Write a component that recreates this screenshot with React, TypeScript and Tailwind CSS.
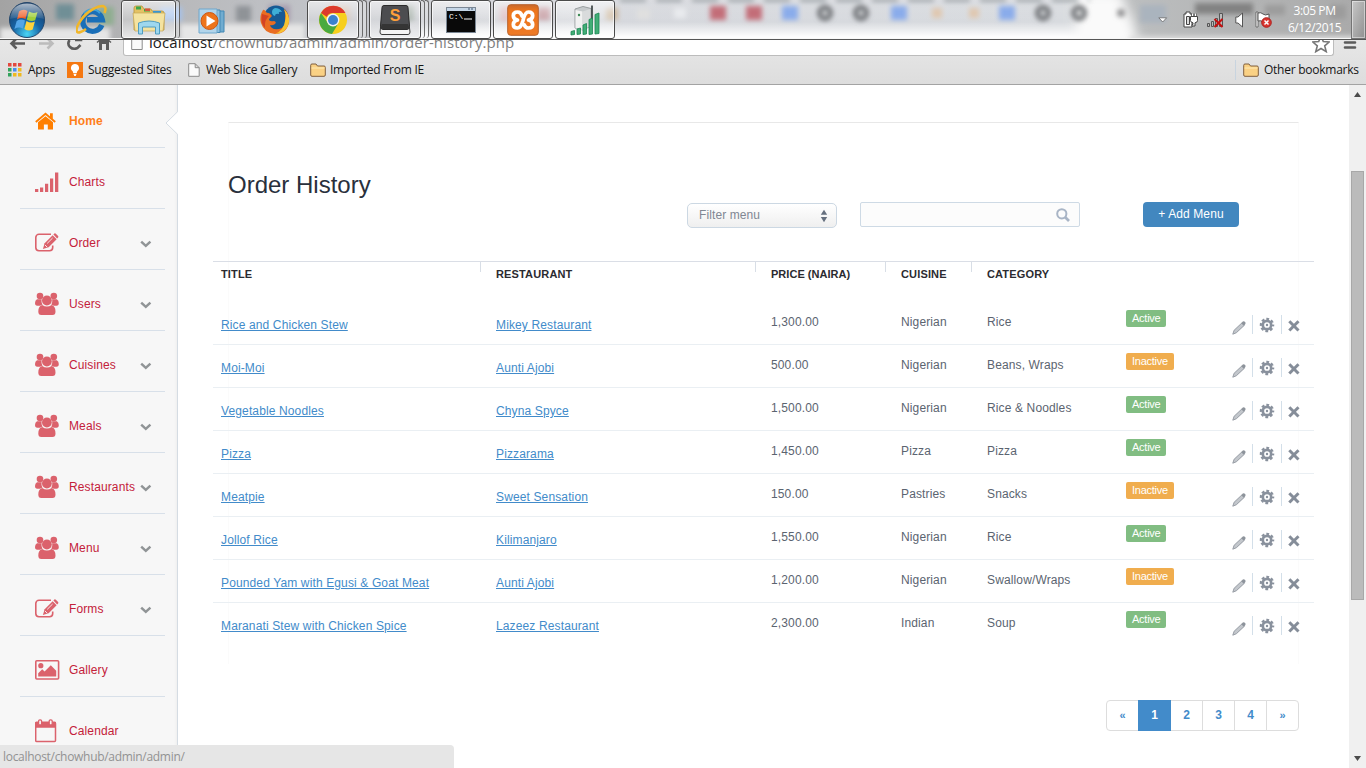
import React from "react";

type IconName = "home" | "charts" | "edit" | "users" | "gallery" | "calendar";

const navItems: { label: string; icon: IconName; expandable?: boolean }[] = [
  { label: "Home", icon: "home" },
  { label: "Charts", icon: "charts" },
  { label: "Order", icon: "edit", expandable: true },
  { label: "Users", icon: "users", expandable: true },
  { label: "Cuisines", icon: "users", expandable: true },
  { label: "Meals", icon: "users", expandable: true },
  { label: "Restaurants", icon: "users", expandable: true },
  { label: "Menu", icon: "users", expandable: true },
  { label: "Forms", icon: "edit", expandable: true },
  { label: "Gallery", icon: "gallery" },
  { label: "Calendar", icon: "calendar" },
];

const orders = [
  { title: "Rice and Chicken Stew", restaurant: "Mikey Restaurant", price: "1,300.00", cuisine: "Nigerian", category: "Rice", active: true },
  { title: "Moi-Moi", restaurant: "Aunti Ajobi", price: "500.00", cuisine: "Nigerian", category: "Beans, Wraps", active: false },
  { title: "Vegetable Noodles", restaurant: "Chyna Spyce", price: "1,500.00", cuisine: "Nigerian", category: "Rice & Noodles", active: true },
  { title: "Pizza", restaurant: "Pizzarama", price: "1,450.00", cuisine: "Pizza", category: "Pizza", active: true },
  { title: "Meatpie", restaurant: "Sweet Sensation", price: "150.00", cuisine: "Pastries", category: "Snacks", active: false },
  { title: "Jollof Rice", restaurant: "Kilimanjaro", price: "1,550.00", cuisine: "Nigerian", category: "Rice", active: true },
  { title: "Pounded Yam with Egusi & Goat Meat", restaurant: "Aunti Ajobi", price: "1,200.00", cuisine: "Nigerian", category: "Swallow/Wraps", active: false },
  { title: "Maranati Stew with Chicken Spice", restaurant: "Lazeez Restaurant", price: "2,300.00", cuisine: "Indian", category: "Soup", active: true },
];

function NavIcon({ name }: { name: IconName }) {
  switch (name) {
    case "home":
      return (
        <svg width="26" height="24" viewBox="0 0 26 24" fill="#ff7f00">
          <path d="M10.500 7.200 18 13.200V20.500h-5.200v-5H8.900v5H3v-7.300z" />
          <path d="M.8 13 10.500 4.800l9.700 8.200" fill="none" stroke="#ff7f00" strokeWidth="1.900" />
          <path d="M15 4.300h2.800v6L15 7.800z" />
        </svg>
      );
    case "charts":
      return (
        <svg width="26" height="24" viewBox="0 0 26 24" fill="#db626c">
          <path d="M0 19h3.300v3H0zM5 17.500h3.200V22H5zM10 13.800h3.200V22H10zM15 8.600h3.200V22H15zM20 2.500h3.300V22H20z" />
        </svg>
      );
    case "edit":
      return (
        <svg width="26" height="24" viewBox="0 0 26 24" fill="none" stroke="#db626c">
          <path d="M16 3.300H4A3.200 3.200 0 0 0 .8 6.500v10A3.200 3.200 0 0 0 4 19.700h10.500a3.200 3.200 0 0 0 3.200-3.200v-2" strokeWidth="1.600" />
          <path d="m9.600 12.300 8-8 4 4-8 8-5.700 1.800z" fill="#db626c" stroke="none" />
          <path d="m18.400 3.500.9-.9q.8-.6 1.600.1l2.200 2.200q.6.800 0 1.500l-1 1z" fill="#db626c" stroke="none" />
          <path d="m12.200 12.400 5.400-5.400M10 14l2.200 2.200" stroke="#f7f7f7" strokeWidth="0.900" />
        </svg>
      );
    case "users":
      return (
        <svg width="26" height="24" viewBox="0 0 26 24" fill="#db626c">
          <circle cx="5" cy="4" r="3.300" />
          <circle cx="18.800" cy="4" r="3.300" />
          <path d="M2 7.300h4.800c-.7 2-.1 4 .8 5.200L5 13.800H2.300Q0 13.800 0 11 0 8.300 2 7.300zM21.800 7.300H17c.7 2 .1 4-.8 5.200l2.600 1.300h2.700q2.300 0 2.300-2.800 0-2.700-2-3.700z" />
          <circle cx="11.900" cy="8.500" r="4.900" />
          <path d="M7.200 12.900q4.700 3.400 9.400 0 3.900 1 3.900 6.600 0 3.500-3 3.500H6.300q-3 0-3-3.500 0-5.600 3.900-6.600z" />
        </svg>
      );
    case "gallery":
      return (
        <svg width="26" height="24" viewBox="0 0 26 24" fill="#db626c">
          <rect x=".8" y="2.800" width="22.800" height="18.200" rx="1" fill="none" stroke="#db626c" strokeWidth="1.600" />
          <circle cx="5.800" cy="7.700" r="2.600" />
          <path d="M3.200 18.500v-3.300l4-4 2.400 2.400 6.200-6.300 5.400 5.400v5.800z" />
        </svg>
      );
    default:
      return (
        <svg width="26" height="24" viewBox="0 0 26 24" fill="none" stroke="#db626c">
          <rect x=".7" y="3.500" width="19.800" height="19" rx="1" strokeWidth="1.500" />
          <path d="M.7 3.200h19.800v5H.7z" fill="#db626c" />
          <rect x="3.600" y=".8" width="3" height="5.200" rx="1.300" fill="#f7f7f7" strokeWidth="1.300" />
          <rect x="14.200" y=".8" width="3" height="5.200" rx="1.300" fill="#f7f7f7" strokeWidth="1.300" />
        </svg>
      );
  }
}

function Sidebar() {
  return (
    <aside className="relative w-[178px] shrink-0 border-r border-[#d5dce3] bg-[#f7f7f7] pt-[2px] shadow-[inset_-3px_0_3px_-2px_#eeeeee]">
      {navItems.map((item, i) => (
        <a
          key={item.label}
          className={`mr-[12px] ml-[20px] flex h-[61px] w-[145px] items-center border-b border-[#d8e0e9] pt-[8px] pl-[15px] text-[12px] ${i === 0 ? "font-bold text-[#ff7f1a]" : "text-[#c4213a]"}`}
        >
          <NavIcon name={item.icon} />
          <span className={`ml-[8px] w-[68px] shrink-0 ${i === 0 ? "tracking-[0.1px]" : "tracking-[0.12px]"}`}>{item.label}</span>
          {item.expandable && (
            <svg className="mt-[1px] ml-[3px] shrink-0" width="12" height="8" viewBox="0 0 12 8" fill="none" stroke="#909496" strokeWidth="2.500">
              <path d="m1.200 1.600 4.600 4.200 4.600-4.200" />
            </svg>
          )}
        </a>
      ))}
      <svg className="absolute top-[26px] right-[-1px]" width="13" height="24" viewBox="0 0 13 24">
        <path d="M13 .5 1 12l12 11.5z" fill="#fff" />
        <path d="M12.500 .8 1 12l11.500 11.200" fill="none" stroke="#d5dce3" />
      </svg>
    </aside>
  );
}

function RowActions() {
  return (
    <div className="flex h-[19px] items-center">
      <svg className="mt-[5px]" width="15" height="15" viewBox="0 0 15 15">
        <path d="m.8 14.200 1.300-3.900L9.800 3l2.400 2.400-7.800 7.300z" fill="#c3c7cc" stroke="#979da5" strokeWidth="1" />
        <path d="m9.200 3.200 1.600-1.700q1-.7 2.100.3t.5 2.200L12 5.700z" fill="#8d939b" />
      </svg>
      <span className="ml-[5px] h-[19px] w-px bg-[#d3dfe9]" />
      <svg className="ml-[6px]" width="16" height="16" viewBox="0 0 16 16" fill="none" stroke="#89919d">
        <circle cx="8" cy="8" r="4.200" strokeWidth="2.700" />
        <circle cx="8" cy="8" r="6.100" strokeWidth="2.300" strokeDasharray="2.790 2" strokeDashoffset="1.390" />
        <circle cx="8" cy="8" r="1.200" fill="#89919d" stroke="none" />
      </svg>
      <span className="ml-[6px] h-[19px] w-px bg-[#d3dfe9]" />
      <svg className="mt-[3px] ml-[6px]" width="12" height="12" viewBox="0 0 12 12" stroke="#858d99" strokeWidth="3">
        <path d="m1.300 1.300 9.200 9.200m0-9.200-9.200 9.200" />
      </svg>
    </div>
  );
}

const columns = "grid grid-cols-[267px_275px_130px_86px_155px_106px_1fr]";

function OrderTable() {
  return (
    <div className="mx-[-16px] text-[12px] text-[#5b6470]">
      <div className={`${columns} h-[41px] border-t border-[#dadee6] text-[11px] font-bold text-[#2b2b30]`}>
        {["TITLE", "RESTAURANT", "PRICE (NAIRA)", "CUISINE", "CATEGORY"].map((h, i) => (
          <div key={h} className="flex">
            {i > 0 && <span className="h-[10px] w-px bg-[#d8dee6]" />}
            <span className={`pt-[3px] whitespace-nowrap ${i === 2 ? "tracking-[0.03px]" : "tracking-[0.15px]"} ${i === 0 ? "pl-[8px]" : "pl-[15px]"}`}>{h}</span>
          </div>
        ))}
      </div>
      {orders.map((o, i) => (
        <div key={o.title} className={`${columns} h-[43px] tracking-[0.13px] ${i < orders.length - 1 ? "border-b border-[#eaeff3]" : ""}`}>
          <div className="pt-[14px] pl-[8px]">
            <a className="whitespace-nowrap text-[#428bca] underline underline-offset-1">{o.title}</a>
          </div>
          <div className="pt-[14px] pl-[16px]">
            <a className="whitespace-nowrap text-[#428bca] underline underline-offset-1">{o.restaurant}</a>
          </div>
          <div className="pt-[11px] pl-[16px]">{o.price}</div>
          <div className="pt-[11px] pl-[16px]">{o.cuisine}</div>
          <div className="pt-[11px] pl-[16px]">{o.category}</div>
          <div className="pt-[8px]">
            <span className={`flex h-[17px] w-fit items-center rounded-[2px] px-[6px] pb-px text-[11px] tracking-[-0.25px] text-white ${o.active ? "bg-[#81bd82]" : "bg-[#f0ad4e]"}`}>
              {o.active ? "Active" : "Inactive"}
            </span>
          </div>
          <div className="pt-[13px]">
            <RowActions />
          </div>
        </div>
      ))}
    </div>
  );
}

function Content() {
  return (
    <main className="w-[1171px] shrink-0 bg-white pt-[37px] pr-[50px] pl-[50px] leading-[18px]">
      <section className="h-[542px] border-x border-t border-x-[#fbfbfb] border-t-[#e8e8e8]">
        <div className="flex h-[138px]">
          <h1 className="mt-[48px] -ml-px w-[459px] text-[24px] leading-[28px] text-[#29303c]">Order History</h1>
          <div className="mt-[80px] flex h-[25px] w-[150px] items-center justify-between rounded-[5px] border border-[#ccd8e3] bg-linear-to-b from-white to-[#efefef] pr-[8px] pb-[2px] pl-[11px] text-[12px] tracking-[0.1px] text-[#808793]">
            <span>Filter menu</span>
            <svg className="mt-[3px]" width="8" height="14" viewBox="0 0 8 14" fill="#66707f">
              <path d="m4 .7 3.200 5H.8zM4 13.300.8 8h6.400z" />
            </svg>
          </div>
          <div className="mt-[79px] ml-[23px] flex h-[25px] w-[220px] items-center justify-end rounded-[2px] border border-[#cedae5] bg-[#fcfcfc] pr-[9px]">
            <svg width="14" height="14" viewBox="0 0 14 14" fill="none" stroke="#a9b5c6" strokeWidth="2">
              <circle cx="5.800" cy="5.800" r="4.600" />
              <path d="m9 9 4 4" strokeWidth="2.600" />
            </svg>
          </div>
          <button className="mt-[79px] ml-[63px] h-[25px] w-[96px] rounded-[4px] bg-[#4287bf] pb-px text-[12px] leading-[18px] tracking-[0.1px] text-white">+ Add Menu</button>
        </div>
        <OrderTable />
      </section>
      <nav className="mt-[36px] flex justify-end text-[12px] font-bold text-[#428bca]">
        {["«", "1", "2", "3", "4", "»"].map((p, i) => (
          <a
            key={p}
            className={`flex h-[31px] w-[33px] items-center justify-center border pb-px ${i > 0 ? "-ml-px" : "rounded-l-[4px]"} ${i === 5 ? "rounded-r-[4px]" : ""} ${i === 1 ? "z-10 border-[#428bca] bg-[#428bca] text-white" : "border-[#dddddd] bg-white"} ${i === 0 || i === 5 ? "text-[11px]" : ""}`}
          >
            {p}
          </a>
        ))}
      </nav>
    </main>
  );
}

function Scrollbar() {
  return (
    <div className="flex w-[17px] shrink-0 flex-col items-center bg-[#f0f0f0]">
      <svg className="mt-[7px]" width="7" height="5" viewBox="0 0 7 5" fill="#4c4c4c">
        <path d="m3.500 0 3.500 5H0z" />
      </svg>
      <div className="mt-[74px] h-[429px] w-[13px] border border-[#a8a8a8] bg-[#bbbbbb]" />
      <svg className="mt-auto mb-[7px]" width="7" height="5" viewBox="0 0 7 5" fill="#4c4c4c">
        <path d="M0 0h7L3.500 5z" />
      </svg>
    </div>
  );
}

function StartOrb() {
  return (
    <svg width="38" height="38" viewBox="0 0 38 38">
      <defs>
        <radialGradient id="orb" cx=".5" cy=".9" r=".9">
          <stop offset="0" stopColor="#49d5f5" />
          <stop offset=".45" stopColor="#1763a4" />
          <stop offset="1" stopColor="#173961" />
        </radialGradient>
        <linearGradient id="gloss" x1="0" y1="0" x2="0" y2="1">
          <stop offset="0" stopColor="#fff" stopOpacity=".65" />
          <stop offset="1" stopColor="#fff" stopOpacity=".08" />
        </linearGradient>
      </defs>
      <circle cx="19" cy="19" r="17.500" fill="url(#orb)" stroke="#24476c" />
      <path d="M11 10.500q4-3 8.500-.5l-2 8q-4.500-2-8.500.5z" fill="#f0622c" />
      <path d="M21 10.500q4 2.500 8.500.5l-2.300 8.200q-4 2-8.400-.8z" fill="#a0cf3b" />
      <path d="M8.700 20q4-2.500 8.300-.5l-2.200 8q-4-2-8.400.5z" fill="#53a5e7" />
      <path d="M18.500 20q4 2.700 8.400.6l-2.200 7.900q-4.200 2.200-8.300-.6z" fill="#ffd23b" />
      <path d="M2 18Q4 2.500 19 2.500T36 18Q19 13 2 18z" fill="url(#gloss)" />
    </svg>
  );
}

function ExplorerIE() {
  return (
    <svg width="32" height="32" viewBox="0 0 32 32" fill="none">
      <path d="M25.800 21A9.800 9.800 0 1 1 26.300 15.800H11" stroke="#1a6fb8" strokeWidth="5.400" />
      <path d="M8 9.500A10.500 10.500 0 0 1 24 9" stroke="#3fa2dc" strokeWidth="2" />
      <path d="M10 25C-1 33-2 26 5 16S22 2 27 2q4 1 1.500 7" stroke="#f0b62a" strokeWidth="2.600" />
    </svg>
  );
}

function FilesIcon() {
  return (
    <svg width="34" height="32" viewBox="0 0 34 32">
      <path d="M2 4q0-2 2-2h6l2 3h7l1 2h10q2 0 2 2v17H2z" fill="#e4c264" stroke="#b89539" strokeWidth=".8" />
      <path d="M4 2.500h5v3H4zM12 5h6v2.500h-6z" fill="#3da84a" />
      <path d="M13 4.500h5V7h-5z" fill="#d8573c" />
      <path d="M21 7h8v3h-8z" fill="#3596d5" />
      <path d="M1 9h32l-2 18H3z" fill="#f4e3a0" stroke="#c5a654" strokeWidth=".7" />
      <path d="M6.500 19q10.500-4 21 0v11h-4v-7h-13v7h-4z" fill="#9ed7ee" stroke="#4f9cc0" />
    </svg>
  );
}

function MediaPlayerIcon() {
  return (
    <svg className="mt-[4px]" width="30" height="28" viewBox="0 0 30 28">
      <path d="M9 3h17v21H9z" fill="#70acd0" stroke="#4388b4" />
      <path d="M5 2h17v22.500H5z" fill="#8fc0df" stroke="#4388b4" />
      <path d="M1 1h18v24H1z" fill="#b2d5eb" stroke="#6ea7cc" />
      <circle cx="11.500" cy="13" r="8.500" fill="#ed741b" stroke="#cc5814" />
      <path d="m8.500 7.500 9 5.500-9 5.500z" fill="#fff" />
    </svg>
  );
}

function FirefoxIcon() {
  return (
    <svg width="32" height="32" viewBox="0 0 32 32">
      <circle cx="17" cy="14" r="12.500" fill="#175a94" />
      <path d="M16 4q5 0 7 4-4-1-3 2-4-1-4 2-3-1-3-4 0-3 3-4z" fill="#3eaed7" />
      <path d="M4 6q-4 6-2 13 3 10 14 11 12 0 14-12 1-8-5-13 2 5 1 9 2 9-6 11-8 1-9-4 2 1 5-1 2-2-1-3-5 1-5-2l3-3q-3-4-5-3-3-4-4-3z" fill="#e96d22" />
      <path d="M25 5q6 6 5 13-2 11-14 12 9-4 10-13 2-5-1-12z" fill="#f6c331" />
      <path d="M3 10q-2 9 3 14-1-8 4-12z" fill="#d34324" />
    </svg>
  );
}

function ChromeIcon() {
  return (
    <svg width="30" height="30" viewBox="0 0 30 30">
      <circle cx="15" cy="15" r="14" fill="#f7cf1c" />
      <path d="M3 8a14 14 0 0 1 24.500 0H15q-5 0-6 4z" fill="#dd3a2b" />
      <path d="M3 8A14 14 0 0 0 14 29l6-10q-5 4-10-1z" fill="#49aa40" />
      <circle cx="15" cy="15" r="6.400" fill="#f4f4f4" />
      <circle cx="15" cy="15" r="5" fill="#3b82ce" />
    </svg>
  );
}

function SublimeIcon() {
  return (
    <svg width="32" height="32" viewBox="0 0 32 32">
      <path d="M3 12h26l2 16q0 2.500-2 2.500H3Q1 30.500 1 28z" fill="#f4f4f4" stroke="#3c3c3c" />
      <path d="M5 1.500h22q2 0 2 2l1.500 19q0 3-2.500 3H4q-2.500 0-2.500-3L3 3.500q0-2 2-2z" fill="#4c4d50" stroke="#2b2b2b" />
      <path d="M3 20h26l1 3q0 2-2 2H4q-2 0-2-2z" fill="#353535" />
      <text x="16" y="17" fontSize="16" fontWeight="700" textAnchor="middle" fill="#ffa03a" className="font-['Liberation_Sans',sans-serif]">S</text>
    </svg>
  );
}

function TerminalIcon() {
  return (
    <svg width="30" height="26" viewBox="0 0 30 26">
      <rect x=".5" y=".5" width="29" height="25" fill="#090909" stroke="#7b8794" />
      <path d="M1 1h28v3H1z" fill="#c5d6e7" />
      <path d="M22 2h2M25 2h2" stroke="#41576e" />
      <text x="3" y="12" fontSize="8" fill="#fff" className="font-['Liberation_Mono',monospace]">C:\</text>
      <path d="M18 12h8" stroke="#fff" />
    </svg>
  );
}

function XamppIcon() {
  return (
    <svg width="32" height="32" viewBox="0 0 32 32" fill="none">
      <defs>
        <linearGradient id="xampp" x1="0" y1="0" x2="0" y2="1">
          <stop offset="0" stopColor="#c9692b" />
          <stop offset=".2" stopColor="#ed751c" />
          <stop offset="1" stopColor="#ee7a26" />
        </linearGradient>
      </defs>
      <rect x=".7" y=".7" width="30.600" height="30.600" rx="3" fill="url(#xampp)" stroke="#b8622c" />
      <path d="M15 12Q14 8 10.500 8 6.300 8 6.300 11.700 6.300 15 10.500 16 6.300 17 6.300 20.500 6.300 24 10.500 24 14 24 16 16.500 18 8 21.500 8 25.700 8 25.700 11.700 25.700 15 21.500 16 25.700 17 25.700 20.500 25.700 24 21.500 24 18.500 24 17.300 21" stroke="#fff" strokeWidth="3.700" strokeLinejoin="round" strokeLinecap="round" />
    </svg>
  );
}

function NetworkMonitorIcon() {
  return (
    <svg width="32" height="32" viewBox="0 0 32 32">
      <path d="m6 5 8-2.500 8 2V22l-8 4-8-2z" fill="#c6cacc" stroke="#9a9fa1" />
      <path d="m6.500 6 7 1.500V26l-7-2z" fill="#f1f1f1" />
      <path d="M13.500 7.500 21.500 5v17l-8 4z" fill="#d9dbdc" />
      <circle cx="10" cy="11" r="1.200" fill="#3c8a55" />
      <path d="M23 1.500v14" stroke="#252d2d" strokeWidth="1.500" />
      <path d="m2 27.500 3.500-1v4l-3.500.5zM8 25l3.500-1v6l-3.500.5zM14 21l3.500-1.500V30l-3.500.5zM20 15.500l3.500-1.500v16l-3.500.5zM26 10.500 30 9v20.500l-4 .5z" fill="#41ae76" stroke="#1b8553" strokeWidth=".8" />
    </svg>
  );
}

const taskButton = "flex h-[39px] shrink-0 items-center justify-center rounded-[3px] border border-[#4b4b4b] bg-linear-to-b from-white/60 via-white/25 to-white/70 shadow-[inset_0_0_0_1px_rgba(255,255,255,0.65)]";

function StackEdges({ count }: { count: number }) {
  return (
    <div className="flex h-[39px] shrink-0">
      {Array.from({ length: count }, (_, i) => (
        <span key={i} className="h-[38px] w-[4px] rounded-r-[3px] border-t border-r border-[#6b6b6b] bg-white/30" />
      ))}
    </div>
  );
}

const blurredSpots: [number, number, number, number, string][] = [
  [56, 4, 18, 16, "#6f8f96"], [98, 7, 16, 18, "#8fae90"], [160, 7, 22, 14, "#a6c2ec"], [236, 6, 15, 16, "#8f9397"],
  [268, 5, 22, 18, "#a79cae"], [328, 5, 22, 16, "#cdb8a9"], [388, 5, 26, 16, "#9aa69d"], [500, 6, 18, 15, "#d8b2b8"],
  [537, 7, 13, 13, "#b9868e"], [606, 8, 12, 12, "#ccb79d"],
  [637, 9, 13, 10, "#e0e0df"], [674, 8, 12, 10, "#e9ebee"], [710, 6, 16, 14, "#c36d78"], [746, 6, 16, 14, "#c36d78"],
  [782, 6, 16, 14, "#8aaceb"], [891, 6, 16, 14, "#8aaceb"], [932, 8, 10, 10, "#e0c8b0"], [969, 8, 10, 10, "#e0c8b0"],
  [999, 6, 16, 14, "#8aaceb"], [1140, 5, 26, 18, "#aab4be"],
  [1195, 3, 58, 11, "#828282"], [1265, 5, 20, 10, "#9c9c9c"], [1330, 5, 16, 14, "#9c9c9c"],
];

function TaskbarGlass() {
  return (
    <svg className="absolute inset-0" width="1366" height="40" viewBox="0 0 1366 40">
      <defs>
        <linearGradient id="glass" x1="0" y1="0" x2="1" y2="0">
          <stop offset="0" stopColor="#a3a3a3" />
          <stop offset=".12" stopColor="#b7b8ba" />
          <stop offset=".23" stopColor="#c1c3c8" />
          <stop offset=".43" stopColor="#d6d8dd" />
          <stop offset=".78" stopColor="#d8dbdf" />
          <stop offset=".83" stopColor="#bcbebf" />
          <stop offset="1" stopColor="#a9a9a9" />
        </linearGradient>
        <linearGradient id="sheen" x1="0" y1="0" x2="0" y2="1">
          <stop offset="0" stopColor="#fff" stopOpacity=".1" />
          <stop offset=".55" stopColor="#fff" stopOpacity="0" />
          <stop offset=".92" stopColor="#fff" stopOpacity=".95" />
        </linearGradient>
        <filter id="soft" x="-50%" y="-50%" width="200%" height="200%">
          <feGaussianBlur stdDeviation="2.500" />
        </filter>
        <filter id="wide" x="-20%" y="-50%" width="140%" height="200%">
          <feGaussianBlur stdDeviation="6" />
        </filter>
      </defs>
      <rect width="1366" height="40" fill="url(#glass)" />
      <rect x="420" width="700" height="40" fill="url(#sheen)" />
      <path d="M1075-8h44l14 30 6 26h-64z" fill="#fafafa" filter="url(#wide)" />
      <g filter="url(#soft)">
        <path d="M0 28h110v14H0zM180 24h125v18H180z" fill="#e6e6e6" />
        <path d="M1130 36h236v8h-236z" fill="#dedede" />
        <path d="M620 0h470" stroke="#91979c" strokeWidth="3" strokeDasharray="26 10" />
        {blurredSpots.map(([x, y, w, h, c]) => (
          <rect key={x} x={x} y={y} width={w} height={h} fill={c} />
        ))}
        {[825, 861, 1043, 1079].map((cx) => (
          <circle key={cx} cx={cx} cy="13" r="5.500" fill="none" stroke="#727478" strokeWidth="5" />
        ))}
        <circle cx="1121" cy="13" r="4" fill="#8e8e90" />
      </g>
      <path d="M0 38.500h1366" stroke="#f8f8f8" />
      <path d="M0 39.500h1366" stroke="#555" />
    </svg>
  );
}

function Tray() {
  return (
    <div className="relative ml-auto flex h-[39px] shrink-0 items-center">
      <svg width="10" height="6" viewBox="0 0 10 6" fill="#fff" stroke="#666" strokeWidth=".8">
        <path d="M.8.8h7.800L4.700 5z" />
      </svg>
      <svg className="ml-[15px]" width="16" height="18" viewBox="0 0 16 18" fill="#fff" stroke="#444" strokeWidth="1">
        <path d="M1 3h2V1h4v2h2v13H1z" />
        <path d="M3.500 5.500h3v8h-3z" fill="#ddd" />
        <path d="M7.500 5.500h7v4q0 2-2.500 2.300V15H9v-1.500h1v-1.700q-2.500-.3-2.500-2.300z" />
        <path d="M9.500 5V2.500M12.500 5V2.500" stroke="#444" strokeWidth="2" />
        <path d="M9.500 5V2.500M12.500 5V2.500" stroke="#fff" strokeWidth="1" />
      </svg>
      <svg className="ml-[8px]" width="17" height="16" viewBox="0 0 17 16" stroke="#555" fill="#bbb">
        <path d="M.5 11.500h2v3h-2zM4.500 9.500h2v5h-2zM8.500 6.500h2v8h-2zM12.500 1.500h3v13h-3z" />
        <path d="m7.500 7 8 8m0-8-8 8" stroke="#c70f0f" strokeWidth="2" />
      </svg>
      <svg className="ml-[11px]" width="10" height="16" viewBox="0 0 10 16" fill="#fff" stroke="#555">
        <path d="M.8 5H3l4.500-4v14L3 11H.8z" />
      </svg>
      <svg className="ml-[10px]" width="17" height="17" viewBox="0 0 17 17">
        <path d="M1 1h2v15H1z" fill="#fff" stroke="#555" strokeWidth=".8" />
        <path d="M3 2q3-1 5 1t6 0v8q-4 2-6 0t-5-1z" fill="#fff" stroke="#555" />
        <circle cx="11.500" cy="11.500" r="4.800" fill="#d93630" stroke="#ac1e1c" />
        <path d="m9.500 9.500 4 4m0-4-4 4" stroke="#fff" strokeWidth="1.500" />
      </svg>
      <div className="mt-[-2px] ml-[13px] w-[59px] text-center font-['Open_Sans',sans-serif] text-[12px] leading-[17px] tracking-[-0.4px] whitespace-nowrap text-white">
        <div>3:05 PM</div>
        <div>6/12/2015</div>
      </div>
      <div className="ml-[7px] h-[39px] w-[15px] border border-[#747474] bg-linear-to-br from-[#c7c7c7] to-[#919191] shadow-[inset_0_0_0_1px_rgba(255,255,255,0.45)]" />
    </div>
  );
}

function Taskbar() {
  return (
    <header className="relative h-[40px] shrink-0 overflow-hidden">
      <TaskbarGlass />
      <div className="relative flex h-[39px] items-center pl-[8px]">
        <StartOrb />
        <div className="ml-[30px] w-[45px]"><ExplorerIE /></div>
        <div className={`${taskButton} w-[55px]`}><FilesIcon /></div>
        <StackEdges count={1} />
        <div className="ml-[18px] w-[61px]"><MediaPlayerIcon /></div>
        <div className="w-[48px]"><FirefoxIcon /></div>
        <div className={`${taskButton} w-[52px]`}><ChromeIcon /></div>
        <StackEdges count={2} />
        <div className={`${taskButton} ml-[2px] w-[52px]`}><SublimeIcon /></div>
        <StackEdges count={2} />
        <div className={`${taskButton} ml-[2px] w-[60px]`}><TerminalIcon /></div>
        <div className={`${taskButton} ml-[2px] w-[60px]`}><XamppIcon /></div>
        <div className={`${taskButton} ml-[2px] w-[60px]`}><NetworkMonitorIcon /></div>
        <Tray />
      </div>
    </header>
  );
}

function FolderIcon() {
  return (
    <svg width="16" height="14" viewBox="0 0 16 14">
      <path d="M.7 12V2.300Q.7 1 2 1h4l1.500 2H14q1.300 0 1.300 1.300V12q0 1.300-1.300 1.300H2Q.7 13.300.7 12z" fill="#fad184" stroke="#806040" />
      <path d="M1.500 5h13" stroke="#ffebb5" />
    </svg>
  );
}

function FileIcon() {
  return (
    <svg width="12" height="14" viewBox="0 0 12 14" fill="#fafafa" stroke="#8b8b8b">
      <path d="M.7.700h6.500l4 4v8.600H.7zM7.200.700v4h4" />
    </svg>
  );
}

function BrowserBars() {
  return (
    <div className="h-[45px] shrink-0 border-b border-[#a3a3a3] bg-linear-to-b from-[#e7e7e7] to-[#dddddd] font-['Open_Sans',sans-serif] text-[#151515]">
      <div className="flex h-[16px] items-start overflow-hidden">
        <svg className="ml-[9px] shrink-0" width="104" height="12" viewBox="0 0 104 12" fill="none" stroke="#5c5c5c" strokeWidth="2.600">
          <path d="M16 3.500H3M7.500-1.500 2.500 3.500l5 5" />
          <path d="M30 3.500h13M38.500-1.500l5 5-5 5" stroke="#bcbcbc" />
          <path d="M60.500 0Q58 4 61 7t7.500 1l3-3" />
          <path d="M66 0h6V-4" />
          <path d="M90 1v9h3V4h4v6h3V1l-5-5z" fill="#5c5c5c" stroke="none" />
          <path d="m88 2.500 7-6 7 6" strokeWidth="1.500" />
        </svg>
        <div className="ml-[10px] flex h-[16px] w-[1211px] shrink-0 items-start rounded-b-[3px] border border-t-0 border-[#bcbcbc] bg-white pl-[7px]">
          <svg className="-mt-px shrink-0" width="12" height="12" viewBox="0 0 12 12" fill="#fafafa" stroke="#8b8b8b">
            <path d="M.7-3v13.500h10.500V-3z" />
          </svg>
          <div className="mt-[-8px] ml-[6px] text-[15px] leading-[20px] tracking-[0.08px] whitespace-nowrap text-[#808080]">
            <span className="text-[#202020]">localhost</span>/chowhub/admin/admin/order-history.php
          </div>
          <svg className="mt-[-5px] mr-[3px] ml-auto shrink-0" width="18" height="18" viewBox="0 0 18 18" fill="#fff" stroke="#777" strokeWidth="1.600">
            <path d="m9 1 2.300 5.500 5.900.5-4.500 3.800 1.500 5.800L9 13.500l-5.200 3.100 1.500-5.800L.8 7l5.900-.5z" />
          </svg>
        </div>
        <svg className="mt-[1px] ml-[9px] shrink-0" width="14" height="8" viewBox="0 0 14 8" stroke="#5b5b5b" strokeWidth="2.600" strokeLinecap="round">
          <path d="M2 1.500h10M2 6.500h10" />
        </svg>
      </div>
      <div className="flex h-[28px] items-center pl-[8px] text-[12px] tracking-[-0.25px]">
        <svg width="14" height="14" viewBox="0 0 14 14">
          {["#e3483e", "#e3483e", "#e3483e", "#33a35c", "#478ded", "#efb91f", "#33a35c", "#efb91f", "#efb91f"].map((c, i) => (
            <rect key={i} x={(i % 3) * 5} y={Math.floor(i / 3) * 5} width="3.500" height="3.500" fill={c} />
          ))}
        </svg>
        <span className="ml-[6px] w-[39px]">Apps</span>
        <svg width="16" height="16" viewBox="0 0 16 16">
          <path d="M0 0h16v16H0z" fill="#f57812" />
          <path d="M8 2a4 4 0 0 0-2.300 7.300l.6 2h3.400l.6-2A4 4 0 0 0 8 2zM6.500 12h3l-.8 2H7.300z" fill="#fff" />
        </svg>
        <span className="ml-[5px] w-[100px] whitespace-nowrap">Suggested Sites</span>
        <FileIcon />
        <span className="ml-[6px] w-[104px] whitespace-nowrap">Web Slice Gallery</span>
        <FolderIcon />
        <span className="ml-[4px] whitespace-nowrap">Imported From IE</span>
        <span className="ml-auto h-[20px] w-px bg-[#c8d4df]" />
        <span className="ml-[7px]"><FolderIcon /></span>
        <span className="ml-[5px] w-[102px] whitespace-nowrap">Other bookmarks</span>
      </div>
    </div>
  );
}

export default function App() {
  return (
    <div className="relative flex h-[768px] w-[1366px] flex-col overflow-hidden bg-white font-['Liberation_Sans',Arial,sans-serif]">
      <Taskbar />
      <BrowserBars />
      <div className="flex min-h-0 flex-1 overflow-hidden">
        <Sidebar />
        <Content />
        <Scrollbar />
      </div>
      <div className="absolute bottom-0 left-0 z-20 flex h-[23px] w-[454px] items-center rounded-tr-[4px] bg-[#e6e6e6] pl-[3px] font-['Open_Sans',sans-serif] text-[12px] tracking-[-0.3px] text-[#929292]">
        localhost/chowhub/admin/admin/
      </div>
    </div>
  );
}
